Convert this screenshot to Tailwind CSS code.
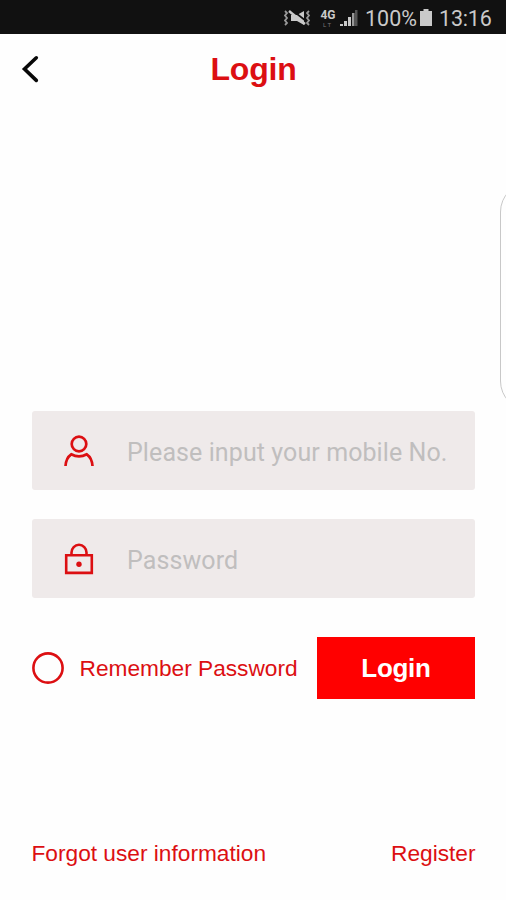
<!DOCTYPE html>
<html lang="en">
<head>
<meta charset="utf-8">
<title>Login</title>
<script src="https://cdn.jsdelivr.net/npm/@tailwindcss/browser@4"></script>
</head>
<body class="bg-[#fefefe]">
<div class="relative flex h-[900px] w-[506px] flex-col overflow-hidden bg-[#fefefe] font-['Liberation_Sans',sans-serif] text-[#dc0f12]">
  <div class="flex h-[34px] shrink-0 items-center bg-[#111111] pl-[284px] pt-[2px] font-[Roboto,sans-serif] text-[#c9c9c9]">
    <svg class="h-[18px] w-[27px] shrink-0" viewBox="0 0 27 18" fill="none">
      <path d="M1 2l2 2-2 2.500 2 2.500-2 2.500 2 2.500-2 2M25 2l-2 2 2 2.500-2 2.500 2 2.500-2 2.500 2 2" stroke="#999" stroke-width="1.800"/>
      <path d="M7 6h6l7-4v14l-7-4H7z" fill="#c9c9c9"/>
      <path d="M8 1l14 11" stroke="#111" stroke-width="1.600"/>
      <path d="M5 2l16 13" stroke="#c9c9c9" stroke-width="2.400"/>
    </svg>
    <div class="ml-[9px] flex w-[16px] flex-col items-center">
      <span class="text-[12px] font-bold leading-[12px]">4G</span>
      <span class="text-[6px] leading-[7px] tracking-[2px] text-[#777]">LT</span>
    </div>
    <svg class="ml-[4px] h-[18px] w-[18px] shrink-0" viewBox="0 0 18 18">
      <path d="M0 15h3v2H0zM4 12h3v5H4zM8 8h3v9H8z" fill="#c9c9c9"/>
      <path d="M12 4h2.500v13H12z" fill="#999"/><path d="M15 1h2.500v16H15z" fill="#555"/>
    </svg>
    <span class="ml-[7px] w-[55px] whitespace-nowrap pt-px text-[21.500px] leading-[26px]">100%</span>
    <svg class="h-[18px] w-[12px] shrink-0" viewBox="0 0 12 18"><path d="M3.500 0h5v2H12v15H0V2h3.500z" fill="#c9c9c9"/></svg>
    <span class="ml-[7px] whitespace-nowrap pt-px text-[21.500px] leading-[26px] tracking-[-0.2px]">13:16</span>
  </div>

  <header class="grid h-[70px] shrink-0 grid-cols-[64px_1fr_64px] items-center">
    <svg class="ml-[20px] h-[30px] w-[20px]" viewBox="0 0 20 30" fill="none" stroke="#080808" stroke-width="3.600" stroke-linecap="round" stroke-linejoin="miter"><path d="M16.300 3.800L4.500 15l11.800 11.400"/></svg>
    <h1 class="pl-px text-center text-[32px] font-bold leading-[36px] tracking-[-0.2px]">Login</h1>
  </header>

  <main class="mt-[307px] flex flex-col px-[32px]">
    <div class="flex h-[79px] w-[443px] items-center rounded-[3px] bg-[#efeaea] pl-[31px]">
      <svg class="h-[34px] w-[32px] shrink-0" viewBox="0 0 32 34" fill="none" stroke="#dc0f12" stroke-width="2.700"><circle cx="16" cy="10" r="7.300"/><path d="M2.500 32c.3-5 2.100-9.200 5.700-11.700 4.700 2.500 10.900 2.500 15.600 0C27.400 22.800 29.200 27 29.500 32"/></svg>
      <span class="ml-[32px] whitespace-nowrap pt-[5px] font-[Roboto,sans-serif] text-[25px] leading-[32px] tracking-[0.09px] text-[#c0bebe]">Please input your mobile No.</span>
    </div>
    <div class="mt-[29px] flex h-[79px] w-[443px] items-center rounded-[3px] bg-[#efeaea] pl-[31px]">
      <svg class="h-[34px] w-[32px] shrink-0" viewBox="0 0 32 34" fill="none" stroke="#dc0f12" stroke-width="2.600"><path d="M3.200 13.300h25.600v17.600H3.200zM8.500 13v-2.500a7.500 7.700 0 0 1 15 0V13"/><circle cx="16" cy="22.200" r="2.700" fill="#dc0f12" stroke="none"/></svg>
      <span class="ml-[32px] whitespace-nowrap pt-[5px] font-[Roboto,sans-serif] text-[25px] leading-[32px] tracking-[0.09px] text-[#c0bebe]">Password</span>
    </div>
    <div class="mt-[39px] flex h-[62px] w-[443px] items-center">
      <svg class="size-[32px] shrink-0" viewBox="0 0 32 32" fill="none" stroke="#dc0f12" stroke-width="2.600"><circle cx="16" cy="16" r="14.600"/></svg>
      <span class="ml-[15.500px] w-[237.500px] whitespace-nowrap text-[22.700px] leading-[28px]">Remember Password</span>
      <button class="h-[62px] w-[158px] shrink-0 bg-[#ff0000] text-[26px] font-bold leading-[30px] tracking-[-0.3px] text-white">Login</button>
    </div>
  </main>

  <footer class="mt-[140px] flex w-[506px] justify-between whitespace-nowrap pl-[31.500px] pr-[30.500px] text-[22.700px] leading-[28px]">
    <span>Forgot user information</span>
    <span>Register</span>
  </footer>

  <div class="absolute left-[500px] top-[182px] h-[229px] w-[60px] rounded-[30px] border border-[#c8c8c8]"></div>
</div>
</body>
</html>
